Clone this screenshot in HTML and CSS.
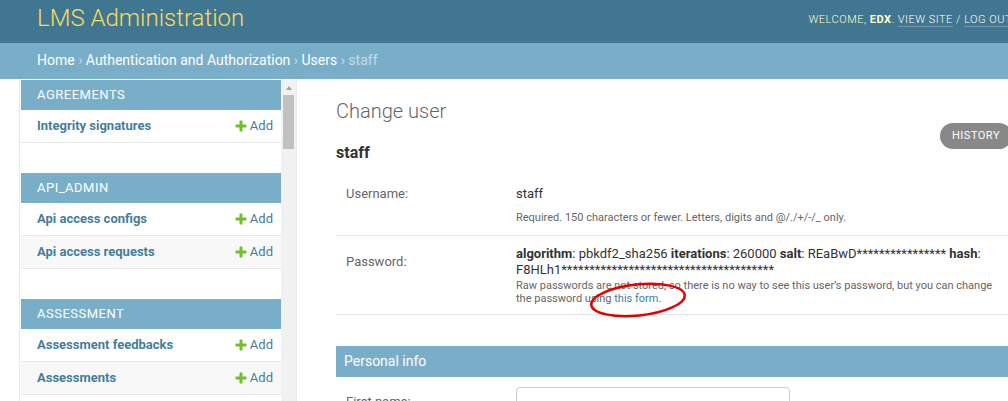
FILE: index.html
```html
<!DOCTYPE html>
<html lang="en">
<head>
<meta charset="utf-8">
<title>Change user | LMS Administration</title>
<link rel="stylesheet" href="styles.css">
</head>
<body>
<div class="page">
  <header class="header">
    <h1 class="brand">LMS Administration</h1>
    <div class="user-tools">Welcome, <strong>edx</strong>. <a href="#">View site</a> / <a href="#">Log out</a></div>
  </header>
  <nav class="breadcrumbs"><a href="#">Home</a> › <a href="#">Authentication and Authorization</a> › <a href="#">Users</a> › staff</nav>
  <div class="main">
    <div class="toggle"></div>
    <aside class="sidebar">
      <div class="modules">
        <section class="app">
          <div class="caption">Agreements</div>
          <div class="rows">
            <div class="model-row"><a class="model" href="#">Integrity signatures</a><a class="addlink" href="#"><svg viewBox="0 0 1792 1792" width="14" height="14"><path fill="#70bf2b" d="M1600 796v192q0 40-28 68t-68 28h-416v416q0 40-28 68t-68 28h-192q-40 0-68-28t-28-68v-416h-416q-40 0-68-28t-28-68v-192q0-40 28-68t68-28h416v-416q0-40 28-68t68-28h192q40 0 68 28t28 68v416h416q40 0 68 28t28 68z"/></svg>Add</a></div>
          </div>
        </section>
        <section class="app">
          <div class="caption">Api_admin</div>
          <div class="rows">
            <div class="model-row"><a class="model" href="#">Api access configs</a><a class="addlink" href="#"><svg viewBox="0 0 1792 1792" width="14" height="14"><path fill="#70bf2b" d="M1600 796v192q0 40-28 68t-68 28h-416v416q0 40-28 68t-68 28h-192q-40 0-68-28t-28-68v-416h-416q-40 0-68-28t-28-68v-192q0-40 28-68t68-28h416v-416q0-40 28-68t68-28h192q40 0 68 28t28 68v416h416q40 0 68 28t28 68z"/></svg>Add</a></div>
            <div class="model-row"><a class="model" href="#">Api access requests</a><a class="addlink" href="#"><svg viewBox="0 0 1792 1792" width="14" height="14"><path fill="#70bf2b" d="M1600 796v192q0 40-28 68t-68 28h-416v416q0 40-28 68t-68 28h-192q-40 0-68-28t-28-68v-416h-416q-40 0-68-28t-28-68v-192q0-40 28-68t68-28h416v-416q0-40 28-68t68-28h192q40 0 68 28t28 68v416h416q40 0 68 28t28 68z"/></svg>Add</a></div>
          </div>
        </section>
        <section class="app">
          <div class="caption">Assessment</div>
          <div class="rows">
            <div class="model-row"><a class="model" href="#">Assessment feedbacks</a><a class="addlink" href="#"><svg viewBox="0 0 1792 1792" width="14" height="14"><path fill="#70bf2b" d="M1600 796v192q0 40-28 68t-68 28h-416v416q0 40-28 68t-68 28h-192q-40 0-68-28t-28-68v-416h-416q-40 0-68-28t-28-68v-192q0-40 28-68t68-28h416v-416q0-40 28-68t68-28h192q40 0 68 28t28 68v416h416q40 0 68 28t28 68z"/></svg>Add</a></div>
            <div class="model-row"><a class="model" href="#">Assessments</a><a class="addlink" href="#"><svg viewBox="0 0 1792 1792" width="14" height="14"><path fill="#70bf2b" d="M1600 796v192q0 40-28 68t-68 28h-416v416q0 40-28 68t-68 28h-192q-40 0-68-28t-28-68v-416h-416q-40 0-68-28t-28-68v-192q0-40 28-68t68-28h416v-416q0-40 28-68t68-28h192q40 0 68 28t28 68v416h416q40 0 68 28t28 68z"/></svg>Add</a></div>
          </div>
        </section>
      </div>
      <div class="scrollbar"><span class="sb-button"><span class="sb-arrow"></span></span><span class="sb-thumb"></span></div>
    </aside>
    <main class="content">
      <h1 class="title">Change user</h1>
      <div class="object-head">
        <h2 class="object-name">staff</h2>
        <a class="history" href="#">History</a>
      </div>
      <fieldset class="fs fs-first">
        <div class="form-row">
          <div class="field"><label class="label">Username:</label><div class="readonly">staff</div></div>
          <div class="help help-single">Required. 150 characters or fewer. Letters, digits and @/./+/-/_ only.</div>
        </div>
        <div class="form-row form-row-pw">
          <div class="field"><label class="label">Password:</label><div class="readonly"><strong>algorithm</strong>: pbkdf2_sha256 <strong>iterations</strong>: 260000 <strong>salt</strong>: REaBwD**************** <strong>hash</strong>: F8HLh1**************************************</div></div>
          <div class="help help-multi">Raw passwords are not stored, so there is no way to see this user’s password, but you can change the password using <a href="#">this form</a>.</div>
          <svg class="annotation" width="102" height="42" viewBox="0 0 102 42"><ellipse cx="51" cy="20" rx="47" ry="15.5" transform="rotate(-6 51 20)" fill="none" stroke="#e50000" stroke-width="2.5"/></svg>
        </div>
      </fieldset>
      <fieldset class="fs fs-personal">
        <h2 class="fs-title">Personal info</h2>
        <div class="form-row">
          <div class="field"><label class="label">First name:</label><input class="vtext" type="text"></div>
        </div>
      </fieldset>
    </main>
  </div>
</div>
</body>
</html>
```

FILE: styles.css
```css
* { box-sizing: border-box; }
html { overflow: hidden; }
body {
  margin: 0;
  font-family: Roboto, "Noto Sans", "Liberation Sans", sans-serif;
  color: #333;
  background: #fff;
}
.page { width: 1050px; }
a { color: #447e9b; text-decoration: none; }

/* header */
.header {
  display: flex;
  justify-content: space-between;
  align-items: flex-start;
  height: 43px;
  padding: 4px 38px 0 37px;
  background: #417690;
  color: #ffc;
}
.brand {
  margin: 0;
  font-size: 24px;
  font-weight: 300;
  line-height: normal;
  color: #f5dd5d;
}
.user-tools {
  padding-top: 9px;
  font-size: 11px;
  font-weight: 300;
  letter-spacing: 0.5px;
  text-transform: uppercase;
  line-height: normal;
}
.user-tools strong { font-weight: 700; }
.user-tools a {
  color: #fff;
  border-bottom: 1px solid rgba(255, 255, 255, 0.25);
}

/* breadcrumbs */
.breadcrumbs {
  padding: 9px 37px 11px;
  background: #79aec8;
  color: #c4dce8;
  font-size: 14px;
  line-height: 16px;
}
.breadcrumbs a { color: #fff; }

/* layout */
.main { display: flex; }
.toggle {
  flex: 0 0 20px;
  border-right: 1px solid #e8e8e8;
}
.sidebar {
  flex: 0 0 277px;
  display: flex;
  padding-left: 1px;
  border-top: 1px solid transparent;
  border-right: 1px solid #e8e8e8;
}
.modules { flex: 1; min-width: 0; }

.app { margin-bottom: 30px; }
.caption {
  padding: 8px 16px;
  line-height: 14px;
  font-size: 13px;
  letter-spacing: 0.5px;
  text-transform: uppercase;
  color: #fff;
  background: #79aec8;
}
.model-row {
  display: flex;
  justify-content: space-between;
  align-items: center;
  padding: 8px 8px 8px 16px;
  font-size: 13px;
  line-height: 16px;
  border-bottom: 1px solid #e8e8e8;
}
.model-row:nth-child(even) { background: #f8f8f8; }
.model { font-weight: 700; }
.addlink { display: flex; align-items: center; gap: 2px; }
.addlink svg { display: block; }

/* fake scrollbar */
.scrollbar {
  flex: 0 0 15px;
  display: flex;
  flex-direction: column;
  align-items: center;
  background: #f1f1f1;
}
.sb-button {
  height: 15px;
  width: 15px;
  display: flex;
  align-items: center;
  justify-content: center;
}
.sb-arrow {
  width: 0;
  height: 0;
  border-left: 3.5px solid transparent;
  border-right: 3.5px solid transparent;
  border-bottom: 4px solid #a3a3a3;
}
.sb-thumb {
  width: 11px;
  height: 54px;
  background: #c1c1c1;
}

/* content */
.content {
  flex: 1;
  min-width: 0;
  padding: 20px 38px 0 39px;
}
.title {
  margin: 0;
  font-size: 20px;
  font-weight: 300;
  line-height: 24px;
  color: #666;
}
.object-head {
  display: flex;
  justify-content: space-between;
  align-items: flex-start;
}
.object-name {
  margin: 20px 0 0;
  font-size: 16px;
  line-height: 19px;
  font-weight: 700;
  color: #333;
}
.history {
  padding: 3px 12px;
  line-height: 20px;
  font-size: 11px;
  letter-spacing: 0.5px;
  text-transform: uppercase;
  color: #fff;
  background: #888;
  border-radius: 15px;
}

.fs {
  margin: 0;
  padding: 0;
  border: 0;
  min-width: 0;
}
.fs-first { margin-top: 14px; }
.fs-personal { margin-top: 31px; }
.fs-title {
  margin: 0;
  padding: 8px;
  font-size: 14px;
  line-height: 15px;
  font-weight: 400;
  color: #fff;
  background: #79aec8;
}

.form-row {
  position: relative;
  padding: 10px;
  border-bottom: 1px solid #e8e8e8;
}
.form-row-pw { padding-bottom: 9px; }
.field {
  display: flex;
  align-items: center;
}
.label {
  flex: 0 0 170px;
  padding-right: 10px;
  font-size: 13px;
  line-height: 16px;
  color: #666;
}
.readonly {
  flex: 1;
  font-size: 13px;
  line-height: 16px;
  color: #333;
}
.readonly strong { font-weight: 700; }
.help {
  margin-left: 170px;
  font-size: 11px;
  color: #666;
}
.help-single { margin-top: 9px; line-height: 14px; }
.help-multi { margin-top: 1px; line-height: 13px; }

.annotation {
  position: absolute;
  left: 251px;
  top: 44px;
}

.vtext {
  width: 274px;
  height: 30px;
  margin: 0;
  padding: 5px 6px;
  border: 1px solid #ccc;
  border-radius: 4px;
  font: 13px Roboto, sans-serif;
  background: #fff;
}
```
